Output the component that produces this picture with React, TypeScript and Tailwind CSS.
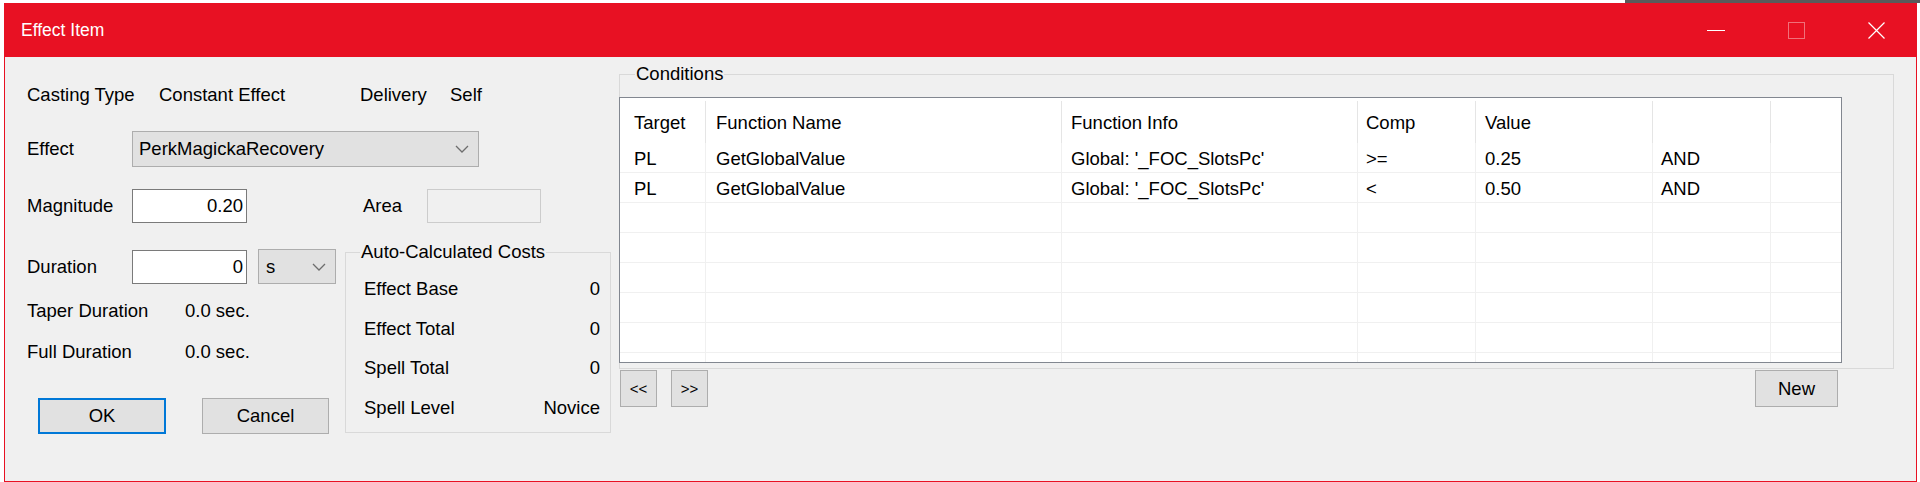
import React from "react";

function Chevron() {
  return (
    <svg width="14" height="8" viewBox="0 0 14 8">
      <polyline points="1,1 7,7 13,1" fill="none" stroke="#6d6d6d" strokeWidth="1.3" />
    </svg>
  );
}

const TitleBar = () => (
  <div className="h-[54px] shrink-0 bg-[#e81123] flex items-center text-white">
    <span className="pl-[16px] text-[17.5px]">Effect Item</span>
    <div className="ml-auto flex h-full">
      <div className="w-[80px] flex items-center justify-center">
        <div className="w-[18px] h-px bg-white" />
      </div>
      <div className="w-[80px] flex items-center justify-center">
        <div className="w-[17px] h-[17px] border border-[#f0707a]" />
      </div>
      <div className="w-[80px] flex items-center justify-center">
        <svg width="17" height="17" viewBox="0 0 17 17">
          <path d="M0.5 0.5 L16.5 16.5 M16.5 0.5 L0.5 16.5" stroke="white" strokeWidth="1.2" />
        </svg>
      </div>
    </div>
  </div>
);

const costs = [
  ["Effect Base", "0"],
  ["Effect Total", "0"],
  ["Spell Total", "0"],
  ["Spell Level", "Novice"],
];

const LeftPane = () => (
  <div className="w-[607px] shrink-0 pl-[22px] pt-[27px]">
    <div className="flex h-[22px]">
      <span className="w-[132px]">Casting Type</span>
      <span className="w-[201px]">Constant Effect</span>
      <span className="w-[90px]">Delivery</span>
      <span>Self</span>
    </div>

    <div className="mt-[25px] flex items-center h-[36px]">
      <span className="w-[105px]">Effect</span>
      <div className="w-[347px] h-[36px] bg-[#e1e1e1] border border-[#adadad] flex items-center pl-[6px] pr-[9px]">
        <span className="flex-1">PerkMagickaRecovery</span>
        <Chevron />
      </div>
    </div>

    <div className="mt-[22px] flex items-center h-[34px]">
      <span className="w-[105px]">Magnitude</span>
      <div className="w-[115px] h-[34px] bg-white border border-[#7a7a7a] flex items-center justify-end pr-[3px]">
        0.20
      </div>
      <span className="ml-[116px] w-[64px]">Area</span>
      <div className="w-[114px] h-[34px] border border-[#cccccc] bg-[#f0f0f0]" />
    </div>

    <div className="mt-[26px] flex items-start">
      <div className="w-[318px]">
        <div className="flex items-center h-[35px]">
          <span className="w-[105px]">Duration</span>
          <div className="w-[115px] h-[34px] bg-white border border-[#7a7a7a] flex items-center justify-end pr-[3px]">
            0
          </div>
          <div className="ml-[11px] w-[78px] h-[35px] bg-[#e1e1e1] border border-[#adadad] flex items-center pl-[7px] pr-[9px]">
            <span className="flex-1">s</span>
            <Chevron />
          </div>
        </div>
        <div className="mt-[16px] flex h-[22px]">
          <span className="w-[158px]">Taper Duration</span>
          <span>0.0 sec.</span>
        </div>
        <div className="mt-[19px] flex h-[22px]">
          <span className="w-[158px]">Full Duration</span>
          <span>0.0 sec.</span>
        </div>
        <div className="mt-[35px] ml-[11px] flex">
          <button className="w-[128px] h-[36px] bg-[#e1e1e1] border-2 border-[#0078d7]">OK</button>
          <button className="ml-[36px] w-[127px] h-[36px] bg-[#e1e1e1] border border-[#adadad]">Cancel</button>
        </div>
      </div>

      <div className="relative mt-[3px] w-[266px] h-[181px] border border-[#d9d9d9] pt-[25px] pl-[18px] pr-[10px]">
        <span className="absolute left-[14px] -top-[12px] px-[1px] bg-[#f0f0f0]">Auto-Calculated Costs</span>
        <div className="flex flex-col gap-[17.5px]">
          {costs.map(([label, value]) => (
            <div key={label} className="flex justify-between h-[22px]">
              <span>{label}</span>
              <span>{value}</span>
            </div>
          ))}
        </div>
      </div>
    </div>
  </div>
);

const columns = [
  { title: "Target", w: "w-[86px]", pl: "pl-[14px]" },
  { title: "Function Name", w: "w-[356px]", pl: "pl-[10px]" },
  { title: "Function Info", w: "w-[296px]", pl: "pl-[9px]" },
  { title: "Comp", w: "w-[118px]", pl: "pl-[8px]" },
  { title: "Value", w: "w-[177px]", pl: "pl-[9px]" },
  { title: "", w: "w-[118px]", pl: "pl-[8px]" },
  { title: "", w: "flex-1", pl: "pl-[8px]" },
];

const rows = [
  ["PL", "GetGlobalValue", "Global: '_FOC_SlotsPc'", ">=", "0.25", "AND", ""],
  ["PL", "GetGlobalValue", "Global: '_FOC_SlotsPc'", "<", "0.50", "AND", ""],
  ["", "", "", "", "", "", ""],
  ["", "", "", "", "", "", ""],
  ["", "", "", "", "", "", ""],
  ["", "", "", "", "", "", ""],
  ["", "", "", "", "", "", ""],
  ["", "", "", "", "", "", ""],
];

const ConditionsPane = () => (
  <div className="ml-[7px] w-[1275px] pt-[17px]">
    <div className="relative h-[295px] border border-[#d9d9d9]">
      <span className="absolute left-[15px] -top-[12px] px-[1px] bg-[#f0f0f0]">Conditions</span>
      <div className="mt-[22px] -ml-px w-[1223px] h-[266px] bg-white border border-[#828790] overflow-hidden">
        <div className="flex h-[45px]">
          {columns.map((c, i) => (
            <div
              key={i}
              className={`${c.w} ${c.pl} mt-[3px] h-[42px] pt-[2px] flex items-center ${
                i < 6 ? "border-r border-[#e5e5e5]" : ""
              }`}
            >
              {c.title}
            </div>
          ))}
        </div>
        {rows.map((r, ri) => (
          <div key={ri} className="flex h-[30px] border-b border-[#f0f0f0]">
            {r.map((cell, ci) => (
              <div
                key={ci}
                className={`${columns[ci].w} ${columns[ci].pl} pt-[2px] flex items-center ${
                  ci < 6 ? "border-r border-[#f0f0f0]" : ""
                }`}
              >
                {cell}
              </div>
            ))}
          </div>
        ))}
      </div>
    </div>
    <div className="mt-[1px] flex">
      <button className="ml-[1px] w-[37px] h-[37px] bg-[#e1e1e1] border border-[#adadad] text-[15px] shadow-[0_0_0_2px_#f0f0f0]">
        &lt;&lt;
      </button>
      <button className="ml-[14px] w-[37px] h-[37px] bg-[#e1e1e1] border border-[#adadad] text-[15px] shadow-[0_0_0_2px_#f0f0f0]">
        &gt;&gt;
      </button>
      <button className="ml-auto mr-[56px] w-[83px] h-[37px] bg-[#e1e1e1] border border-[#adadad] shadow-[0_0_0_2px_#f0f0f0]">
        New
      </button>
    </div>
  </div>
);

export default function App() {
  return (
    <div className="w-[1920px] h-[482px] overflow-hidden bg-white flex flex-col font-['Liberation_Sans',Arial,sans-serif] text-[18.5px] leading-[22px] text-black">
      <div className="h-[3px] shrink-0 flex">
        <div className="w-[1625px] bg-white" />
        <div className="flex-1 bg-[#5a5a5a]" />
      </div>
      <div className="flex-1 flex pl-[4px] pr-[3px] min-h-0">
        <div className="flex-1 flex flex-col border border-t-0 border-[#e81123] bg-[#f0f0f0]">
          <TitleBar />
          <div className="flex-1 flex">
            <LeftPane />
            <ConditionsPane />
          </div>
        </div>
      </div>
    </div>
  );
}
